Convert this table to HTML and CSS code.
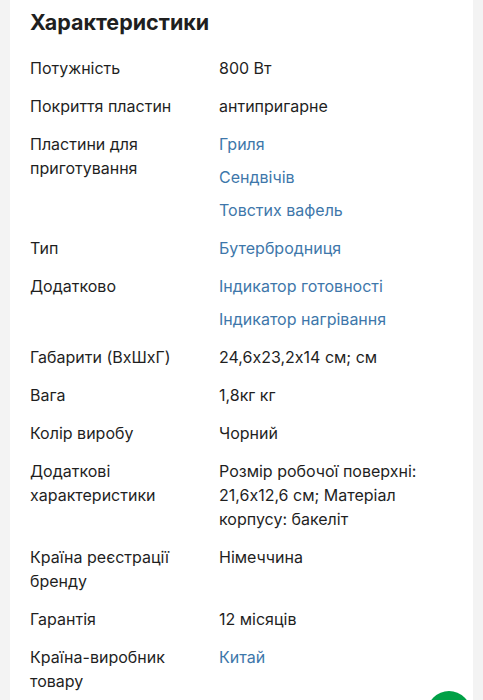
FILE: index.html
```html
<!DOCTYPE html>
<html lang="uk">
<head>
<meta charset="utf-8">
<title>Характеристики</title>
<link rel="stylesheet" href="styles.css">
</head>
<body>
<div class="page">
  <section class="card">
    <h2 class="title">Характеристики</h2>
    <dl class="specs">
      <div class="row"><dt>Потужність</dt><dd><span>800 Вт</span></dd></div>
      <div class="row"><dt>Покриття пластин</dt><dd><span>антипригарне</span></dd></div>
      <div class="row"><dt>Пластини для приготування</dt><dd><a href="#">Гриля</a><a href="#">Сендвічів</a><a href="#">Товстих вафель</a></dd></div>
      <div class="row"><dt>Тип</dt><dd><a href="#">Бутербродниця</a></dd></div>
      <div class="row"><dt>Додатково</dt><dd><a href="#">Індикатор готовності</a><a href="#">Індикатор нагрівання</a></dd></div>
      <div class="row"><dt>Габарити (ВхШхГ)</dt><dd><span>24,6x23,2x14 см; см</span></dd></div>
      <div class="row"><dt>Вага</dt><dd><span>1,8кг кг</span></dd></div>
      <div class="row"><dt>Колір виробу</dt><dd><span>Чорний</span></dd></div>
      <div class="row"><dt>Додаткові характеристики</dt><dd><span>Розмір робочої поверхні: 21,6x12,6 см; Матеріал корпусу: бакеліт</span></dd></div>
      <div class="row"><dt>Країна реєстрації бренду</dt><dd><span>Німеччина</span></dd></div>
      <div class="row"><dt>Гарантія</dt><dd><span>12 місяців</span></dd></div>
      <div class="row"><dt>Країна-виробник товару</dt><dd><a href="#">Китай</a></dd></div>
    </dl>
  </section>
  <button class="fab" aria-label="Чат"></button>
</div>
</body>
</html>
```

FILE: styles.css
```css
html, body {
  margin: 0;
  padding: 0;
  background: #f3f3f3;
  height: 100%;
  overflow: hidden;
}
body {
  font-family: Inter, "Noto Sans", sans-serif;
  font-feature-settings: "calt" 0;
  color: #1f1f1f;
}
.page {
  padding: 0 10px;
  height: 700px;
  position: relative;
}
.card {
  background: #fff;
  padding: 8px 20px 20px;
  min-height: 692px;
}
.title {
  margin: 0 0 20px;
  font-size: 21.5px;
  line-height: 28px;
  font-weight: 700;
  color: #1f1f1f;
}
.specs {
  margin: 0;
  display: flex;
  flex-direction: column;
  gap: 14px;
}
.row {
  display: grid;
  grid-template-columns: 189px 1fr;
  font-size: 16px;
  line-height: 24px;
}
.row dt {
  padding-right: 16px;
}
.row dd {
  margin: 0;
  display: flex;
  flex-direction: column;
  align-items: flex-start;
  gap: 9px;
}
.row a {
  color: #3e77aa;
  text-decoration: none;
}
.fab {
  position: absolute;
  left: 427px;
  top: 691px;
  width: 44px;
  height: 44px;
  border-radius: 50%;
  border: 0;
  padding: 0;
  background: #00a046;
}
```
